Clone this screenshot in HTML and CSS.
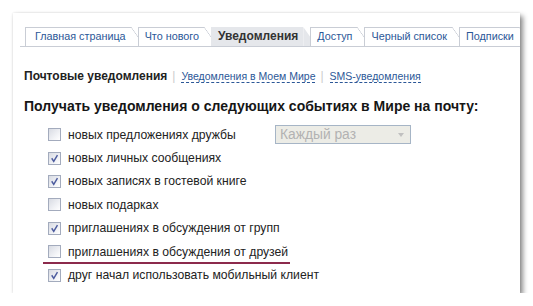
FILE: index.html
```html
<!DOCTYPE html>
<html lang="ru">
<head>
    <meta charset="UTF-8">
    <title>Уведомления</title>
    <link rel="stylesheet" href="styles.css">
</head>
<body>
    <div class="card">
        <ul class="tabs">
            <li class="tab first"><a href="#">Главная страница</a></li>
            <li class="tab"><a href="#">Что нового</a></li>
            <li class="tab active"><a href="#">Уведомления</a></li>
            <li class="tab"><a href="#">Доступ</a></li>
            <li class="tab"><a href="#">Черный список</a></li>
            <li class="tab"><a href="#">Подписки</a></li>
        </ul>

        <div class="content">
            <div class="subnav">
                <b>Почтовые уведомления</b>
                <span class="sep">|</span>
                <a href="#" class="dashed">Уведомления в Моем Мире</a>
                <span class="sep">|</span>
                <a href="#" class="dashed">SMS-уведомления</a>
            </div>

            <h2>Получать уведомления о следующих событиях в Мире на почту:</h2>

            <ul class="options">
                <li class="option">
                    <span class="box"></span>
                    <span class="label wide">новых предложениях дружбы</span>
                    <div class="select">Каждый раз<span class="arrow"></span></div>
                </li>
                <li class="option">
                    <span class="box checked"><svg viewBox="0 0 13 13"><path d="M3.2 6.2 L5.6 9.8 L10 2.4"/></svg></span>
                    <span class="label">новых личных сообщениях</span>
                </li>
                <li class="option">
                    <span class="box checked"><svg viewBox="0 0 13 13"><path d="M3.2 6.2 L5.6 9.8 L10 2.4"/></svg></span>
                    <span class="label">новых записях в гостевой книге</span>
                </li>
                <li class="option">
                    <span class="box"></span>
                    <span class="label">новых подарках</span>
                </li>
                <li class="option">
                    <span class="box checked"><svg viewBox="0 0 13 13"><path d="M3.2 6.2 L5.6 9.8 L10 2.4"/></svg></span>
                    <span class="label">приглашениях в обсуждения от групп</span>
                </li>
                <li class="option marked">
                    <span class="box"></span>
                    <span class="label">приглашениях в обсуждения от друзей</span>
                </li>
                <li class="option">
                    <span class="box checked"><svg viewBox="0 0 13 13"><path d="M3.2 6.2 L5.6 9.8 L10 2.4"/></svg></span>
                    <span class="label">друг начал использовать мобильный клиент</span>
                </li>
            </ul>
        </div>
    </div>
</body>
</html>
```

FILE: styles.css
```css
* {
    margin: 0;
    padding: 0;
    box-sizing: border-box;
}

body {
    background: #fff;
    font-family: 'Liberation Sans', Arial, sans-serif;
    color: #222;
}

.card {
    margin: 13px 0 0 13px;
    width: 507px;
    height: 280px;
    background: #fff;
    box-shadow: 3px 3px 5px rgba(0, 0, 0, 0.45), 0 0 2px rgba(0, 0, 0, 0.12);
    padding-top: 14px;
    overflow: hidden;
}

/* вкладки */
.tabs {
    list-style: none;
    display: flex;
    margin-left: 7px;
    padding-left: 5px;
    border-bottom: 1px solid #c9cdd5;
    height: 20px;
    overflow: hidden;
    white-space: nowrap;
}

.tab {
    position: relative;
    height: 19px;
    margin-right: 7px;
    border-top: 1px solid #c9cdd5;
    border-left: 1px solid #c9cdd5;
    flex-shrink: 0;
}

.tab::after {
    content: "";
    position: absolute;
    top: -1px;
    right: -7px;
    width: 7px;
    height: 10px;
    background: linear-gradient(to top right, transparent calc(50% - 0.6px), #c9cdd5 50%, transparent calc(50% + 0.6px));
}

.tab a {
    display: block;
    padding: 0 5px 0 6px;
    line-height: 17px;
    font-size: 10.8px;
    color: #2b5797;
    text-decoration: none;
}

.tab.first a {
    padding-left: 9px;
}

.tab.active {
    background: #e5e7eb;
    border-left-color: #e5e7eb;
    border-top-color: #e5e7eb;
}

.tab.active::after {
    height: 20px;
    background: #e5e7eb;
    clip-path: polygon(0 0, 100% 10px, 100% 100%, 0 100%);
}

.tab.active a {
    color: #333;
    font-size: 12px;
    font-weight: bold;
}

/* содержимое */
.content {
    padding: 22px 0 0 11px;
}

.subnav {
    display: flex;
    align-items: baseline;
    font-size: 12px;
    height: 20px;
}

.subnav b {
    color: #222;
}

.sep {
    color: #ccc;
    margin: 0 6px 0 5px;
}

.dashed {
    font-size: 10.5px;
    color: #2b5797;
    text-decoration: none;
    border-bottom: 1px dashed #2b5797;
}

h2 {
    margin-top: 9px;
    font-size: 14px;
    font-weight: bold;
    color: #161616;
}

.options {
    list-style: none;
    margin-top: 9px;
    padding-left: 24px;
}

.option {
    position: relative;
    display: flex;
    align-items: center;
    height: 23.4px;
    font-size: 12.2px;
    color: #222;
}

.box {
    width: 13px;
    height: 13px;
    border: 1px solid #a3abbd;
    background: linear-gradient(135deg, #d8dbe3 0%, #f4f5f8 70%, #fff 100%);
    margin-right: 7px;
    flex-shrink: 0;
}

.box svg {
    display: block;
    width: 11px;
    height: 11px;
}

.box svg path {
    fill: none;
    stroke: #4c5b9e;
    stroke-width: 1.7;
}

.label {
    line-height: 16px;
}

.label.wide {
    width: 207px;
    flex-shrink: 0;
}

.select {
    position: relative;
    width: 136px;
    height: 19px;
    margin-top: -1px;
    border: 1px solid #a6b5c6;
    background: #ecece6;
    color: #b2b2b2;
    font-size: 13.8px;
    line-height: 17px;
    padding-left: 4px;
}

.arrow {
    position: absolute;
    right: 6px;
    top: 7px;
    border-left: 3.5px solid transparent;
    border-right: 3.5px solid transparent;
    border-top: 4px solid #c0c0c0;
}

/* пометка */
.option.marked::after {
    content: "";
    position: absolute;
    left: -5px;
    bottom: -1px;
    width: 247px;
    height: 2px;
    background: #8c2a4c;
}
```
